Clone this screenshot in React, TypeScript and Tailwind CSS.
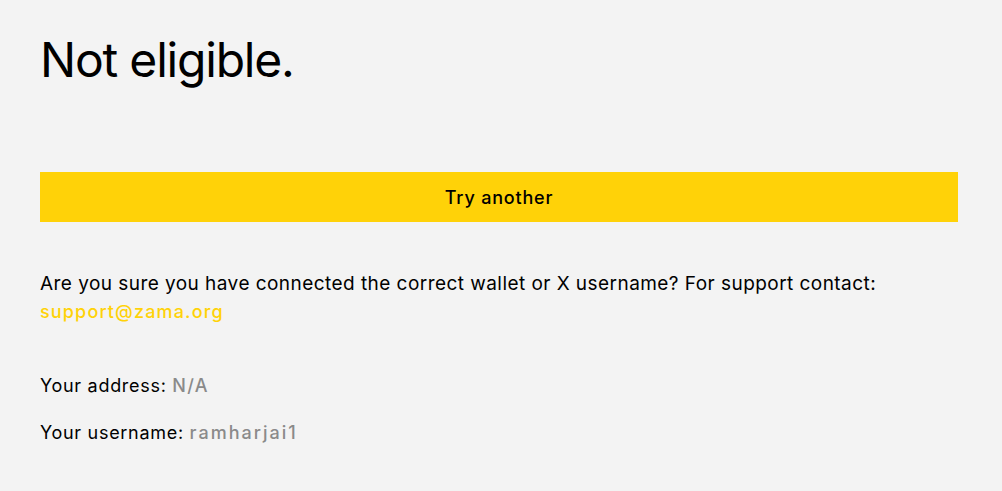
export default function App() {
  return (
    <div className="min-h-screen w-full bg-[#f3f3f3] pl-10 pr-[44px] pt-[30px] font-['Inter',sans-serif] text-black">
      <h1 className="text-[48px] leading-[60px] tracking-[-1.2px]">Not eligible.</h1>
      <button className="mt-[82px] h-[50px] w-full bg-[#ffd208] text-[18px] font-medium tracking-[0.8px]">
        Try another
      </button>
      <p className="mt-[48px] text-[19px] leading-[28px] tracking-[0.45px]">
        Are you sure you have connected the correct wallet or X username? For support contact:{" "}
        <a className="text-[18px] font-medium tracking-[1.15px] text-[#ffd208]">support@zama.org</a>
      </p>
      <div className="mt-[46px] flex flex-col gap-[19px] text-[18px] leading-[28px] tracking-[0.7px]">
        <p>
          Your address: <span className="font-medium tracking-[1.3px] text-[#8a8a8a]">N/A</span>
        </p>
        <p>
          Your username: <span className="font-medium tracking-[2px] text-[#8a8a8a]">ramharjai1</span>
        </p>
      </div>
    </div>
  );
}
